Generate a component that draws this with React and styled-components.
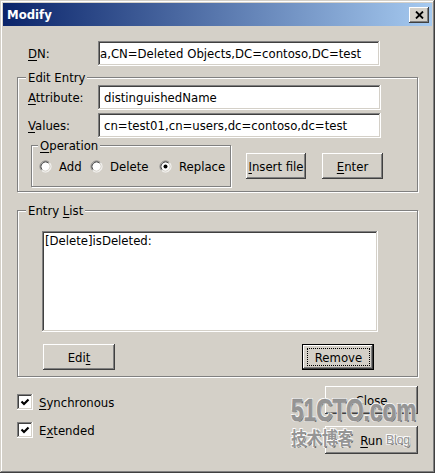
import React from 'react';
import styled, { createGlobalStyle, css } from 'styled-components';

const FACE = '#d4d0c8';
const FONT = `Tahoma, "DejaVu Sans Condensed", "Liberation Sans", sans-serif`;

const GlobalStyle = createGlobalStyle`
  html, body { margin: 0; padding: 0; background: ${FACE}; }
  * { box-sizing: border-box; }
  #root { width: 435px; height: 473px; }
`;

const raised = css`
  box-shadow: inset -1px -1px #404040, inset 1px 1px #ffffff,
    inset -2px -2px #808080, inset 2px 2px ${FACE};
`;

const sunken = css`
  box-shadow: inset -1px -1px #ffffff, inset 1px 1px #808080,
    inset -2px -2px ${FACE}, inset 2px 2px #404040;
`;

const Window = styled.div`
  position: relative;
  width: 435px;
  height: 473px;
  padding: 3px;
  background: ${FACE};
  box-shadow: inset -1px -1px #404040, inset 1px 1px ${FACE},
    inset -2px -2px #808080, inset 2px 2px #ffffff;
  display: flex;
  flex-direction: column;
  font-family: ${FONT};
  font-size: 13px;
  line-height: 15px;
  color: #000;
  overflow: hidden;
`;

const TitleBar = styled.div`
  flex: none;
  height: 23px;
  display: flex;
  align-items: center;
  justify-content: space-between;
  padding: 0 3px 0 4px;
  background: linear-gradient(to right, #0a246a, #a6caf0);
`;

const Title = styled.span`
  color: #fff;
  font-weight: bold;
  font-size: 13px;
`;

const CaptionButton = styled.div`
  width: 20px;
  height: 16px;
  background: ${FACE};
  ${raised};
  display: flex;
  align-items: center;
  justify-content: center;
`;

const Mn = styled.span`
  text-decoration: underline;
  text-underline-offset: 2px;
`;

const DNRow = styled.div`
  display: flex;
  align-items: center;
  margin-top: 15px;
  padding-left: 25px;
`;

const FieldRow = styled.div`
  display: flex;
  align-items: center;
  padding-left: 10px;
  margin-top: ${(p) => p.$mt || 0}px;
`;

const Label = styled.span`
  flex: none;
  width: 70px;
`;

const TextBox = styled.div`
  flex: none;
  width: ${(p) => p.$w}px;
  height: 25px;
  background: #fff;
  ${sunken};
  display: flex;
  align-items: center;
  padding: ${(p) => (p.$scrolled ? '0 4px 0 2px' : '0 4px 0 6px')};
  white-space: nowrap;
  overflow: hidden;
`;

const GroupBox = styled.fieldset`
  flex: none;
  margin: ${(p) => p.$mt || 0}px 0 0 ${(p) => p.$ml || 0}px;
  padding: ${(p) => p.$pad || '0'};
  width: ${(p) => p.$w}px;
  min-inline-size: 0;
  border: 1px solid #808080;
  box-shadow: inset 1px 1px #ffffff, 1px 1px #ffffff;
`;

const Legend = styled.legend`
  margin-left: ${(p) => p.$ml}px;
  padding: 0 2px;
  line-height: 15px;
  background: ${FACE};
`;

const OpRow = styled.div`
  display: flex;
  align-items: flex-start;
`;

const RadioRow = styled.div`
  display: flex;
  align-items: center;
  height: 13px;
  padding-left: 7px;
`;

const RadioItem = styled.label`
  flex: none;
  display: flex;
  align-items: center;
  gap: 7px;
  width: ${(p) => (p.$w ? `${p.$w}px` : 'auto')};
`;

const Button = styled.div`
  flex: none;
  position: relative;
  width: ${(p) => p.$w}px;
  height: ${(p) => p.$h || 26}px;
  margin: ${(p) => p.$mt || 0}px 0 0 ${(p) => p.$ml || 0}px;
  background: ${FACE};
  display: flex;
  align-items: center;
  justify-content: center;
  white-space: nowrap;
  ${(p) =>
    p.$default
      ? css`
          box-shadow: inset 0 0 0 1px #000, inset -2px -2px #404040,
            inset 2px 2px #ffffff, inset -3px -3px #808080,
            inset 3px 3px ${FACE};
        `
      : raised};
`;

const FocusRing = styled.span`
  position: absolute;
  inset: 4px 4px 4px 5px;
  border: 1px dotted #000;
  display: flex;
  align-items: center;
  justify-content: center;
`;

const ListBox = styled.div`
  width: 336px;
  height: 101px;
  margin: 13px 0 0 24px;
  background: #fff;
  ${sunken};
  padding: 2px 3px;
`;

const ListButtons = styled.div`
  display: flex;
  margin-top: 12px;
  padding-left: 25px;
`;

const Bottom = styled.div`
  display: flex;
  justify-content: space-between;
  align-items: flex-start;
  padding: 0 14px;
`;

const CheckColumn = styled.div`
  display: flex;
  flex-direction: column;
  gap: 12px;
  padding-top: 17px;
`;

const CheckRow = styled.label`
  display: flex;
  align-items: center;
  height: 16px;
  gap: 6px;
`;

const CheckBox = styled.span`
  flex: none;
  width: 16px;
  height: 16px;
  background: #fff;
  ${sunken};
  display: flex;
  align-items: center;
  justify-content: center;
`;

const ButtonColumn = styled.div`
  display: flex;
  flex-direction: column;
  gap: 12px;
  padding-top: 9px;
`;

const Watermark = styled.div`
  position: absolute;
  left: 291px;
  top: 396px;
  pointer-events: none;
  color: #959595;
  text-shadow: -1px -1px 0 #ffffff, 1px -1px 0 #f2f2f2, -1px 1px 0 #e8e8e8,
    1px 1px 0 #6a6a6a;
`;

const WmBig = styled.div`
  font-family: 'Liberation Sans', Arial, sans-serif;
  font-weight: bold;
  font-size: 31px;
  line-height: 30px;
  white-space: nowrap;
  transform: scaleX(0.73);
  transform-origin: left top;
  -webkit-text-stroke: 0.6px #8a8a8a;
`;

const WmCn = styled.div`
  margin-top: 2px;
  font-family: 'Noto Sans CJK SC', sans-serif;
  font-weight: bold;
  font-size: 18px;
  line-height: 18px;
  white-space: nowrap;
  transform: scaleX(0.86);
  transform-origin: left top;
`;

const WmBlog = styled.span`
  position: absolute;
  left: 95px;
  top: 38px;
  font-family: 'Liberation Sans', Arial, sans-serif;
  font-size: 12px;
  line-height: 12px;
`;

const Radio = ({ checked }) => (
  <svg width="13" height="13" viewBox="0 0 13 13">
    <circle cx="6.5" cy="6.5" r="5" fill="#fff" />
    <path d="M2.61 10.39 A5.5 5.5 0 0 1 10.39 2.61" stroke="#808080" fill="none" />
    <path d="M10.39 2.61 A5.5 5.5 0 0 1 2.61 10.39" stroke="#ffffff" fill="none" />
    <path d="M3.32 9.68 A4.5 4.5 0 0 1 9.68 3.32" stroke="#404040" fill="none" />
    <path d="M9.68 3.32 A4.5 4.5 0 0 1 3.32 9.68" stroke={FACE} fill="none" />
    {checked && <circle cx="6.5" cy="6.5" r="2" fill="#000" />}
  </svg>
);

const Check = () => (
  <svg width="10" height="10" viewBox="0 0 10 10">
    <path d="M1.5 4.5 L4 7 L8.5 2.5" stroke="#000" strokeWidth="2.2" fill="none" />
  </svg>
);

const CloseGlyph = () => (
  <svg width="9" height="8" viewBox="0 0 9 8">
    <path d="M1 0.5 L8 7.5 M8 0.5 L1 7.5" stroke="#000" strokeWidth="1.8" />
  </svg>
);

export default function App() {
  return (
    <>
      <GlobalStyle />
      <Window>
        <TitleBar>
          <Title>Modify</Title>
          <CaptionButton>
            <CloseGlyph />
          </CaptionButton>
        </TitleBar>

        <DNRow>
          <Label>
            <Mn>D</Mn>N:
          </Label>
          <TextBox $w={282} $scrolled>
            a,CN=Deleted Objects,DC=contoso,DC=test
          </TextBox>
        </DNRow>

        <GroupBox $ml={14} $mt={4} $w={401} $pad="0 0 4px 0">
          <Legend $ml={8}>Edit Entry</Legend>
          <FieldRow>
            <Label>
              <Mn>A</Mn>ttribute:
            </Label>
            <TextBox $w={283}>distinguishedName</TextBox>
          </FieldRow>
          <FieldRow $mt={3}>
            <Label>
              <Mn>V</Mn>alues:
            </Label>
            <TextBox $w={283}>cn=test01,cn=users,dc=contoso,dc=test</TextBox>
          </FieldRow>
          <OpRow>
            <GroupBox $ml={13} $w={200} $pad="7px 0 13px 0">
              <Legend $ml={6}>
                <Mn>O</Mn>peration
              </Legend>
              <RadioRow>
                <RadioItem $w={51}>
                  <Radio />
                  Add
                </RadioItem>
                <RadioItem $w={69}>
                  <Radio />
                  Delete
                </RadioItem>
                <RadioItem>
                  <Radio checked />
                  Replace
                </RadioItem>
              </RadioRow>
            </GroupBox>
            <Button $w={60} $ml={15} $mt={15}>
              <span>
                <Mn>I</Mn>nsert file
              </span>
            </Button>
            <Button $w={61} $ml={16} $mt={15}>
              <span>
                <Mn>E</Mn>nter
              </span>
            </Button>
          </OpRow>
        </GroupBox>

        <GroupBox $ml={14} $mt={11} $w={401} $pad="0 0 6px 0">
          <Legend $ml={8}>
            Entry <Mn>L</Mn>ist
          </Legend>
          <ListBox>[Delete]isDeleted:</ListBox>
          <ListButtons>
            <Button $w={72}>
              <span>
                Edi<Mn>t</Mn>
              </span>
            </Button>
            <Button $w={72} $ml={187} $default>
              <FocusRing>Remove</FocusRing>
            </Button>
          </ListButtons>
        </GroupBox>

        <Bottom>
          <CheckColumn>
            <CheckRow>
              <CheckBox>
                <Check />
              </CheckBox>
              <span>
                <Mn>S</Mn>ynchronous
              </span>
            </CheckRow>
            <CheckRow>
              <CheckBox>
                <Check />
              </CheckBox>
              <span>
                E<Mn>x</Mn>tended
              </span>
            </CheckRow>
          </CheckColumn>
          <ButtonColumn>
            <Button $w={93} $h={28}>
              Close
            </Button>
            <Button $w={93} $h={28}>
              <span>
                <Mn>R</Mn>un
              </span>
            </Button>
          </ButtonColumn>
        </Bottom>

        <Watermark>
          <WmBig>51CTO.com</WmBig>
          <WmCn>技术博客</WmCn>
          <WmBlog>Blog</WmBlog>
        </Watermark>
      </Window>
    </>
  );
}
